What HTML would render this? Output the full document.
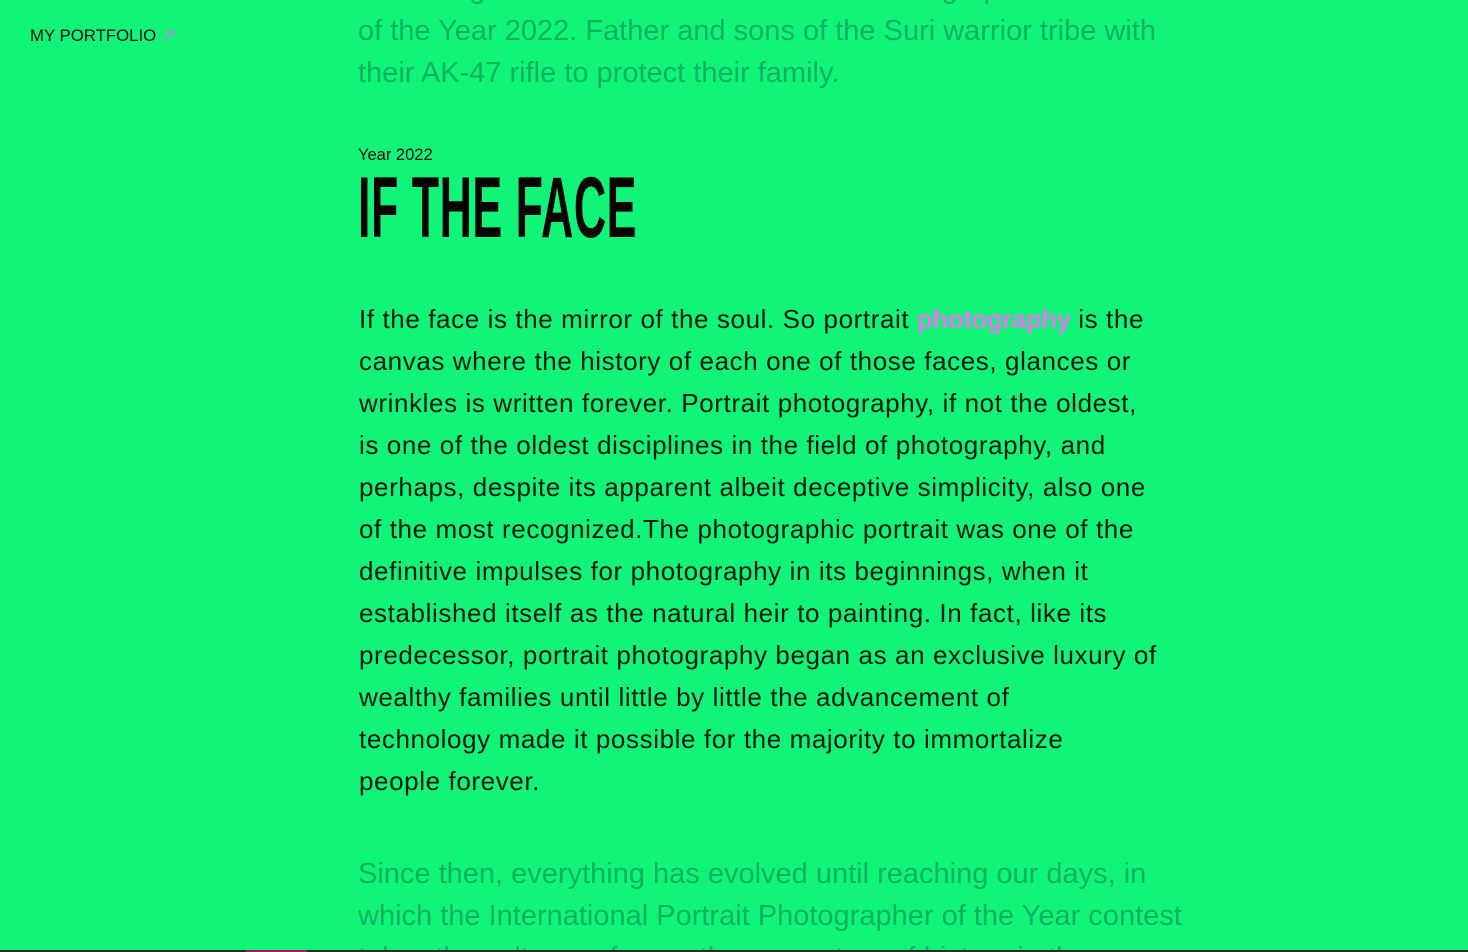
<!DOCTYPE html>
<html><head><style>
html,body{margin:0;padding:0;width:1468px;height:952px;overflow:hidden;background:#10f578;position:relative;font-family:"Liberation Sans",sans-serif}
.nav{position:absolute;left:30px;top:25px;font-size:16.8px;color:#111}
.nav span{color:#d86ef0;font-size:18px}
.fade{position:absolute;left:358px;font-size:29px;line-height:42px;color:#0cb261;white-space:nowrap}
.year{position:absolute;left:358px;top:146px;font-size:16.5px;color:#111}
.h{position:absolute;left:358px;top:160px;font-size:86px;font-weight:bold;color:#000;transform:scaleX(0.52);transform-origin:left top;white-space:nowrap;line-height:96px;letter-spacing:1px}
.body{position:absolute;left:359px;top:298px;font-size:26px;line-height:42px;color:#0a1a10;white-space:nowrap;letter-spacing:0.6px}
.body .p{color:#dd7cf0;font-weight:bold;letter-spacing:-0.5px}
.bar{position:absolute;left:0;top:950px;width:1468px;height:2px;background:#2a2a2a}
.bar i{position:absolute;left:246px;width:61px;height:2px;background:#b0106e}
</style></head><body>
<div class="nav">MY PORTFOLIO <span>↗</span></div>
<div class="fade" style="top:-32px">their image as the International Portrait Photographer</div>
<div class="fade" style="top:10px">of the Year 2022. Father and sons of the Suri warrior tribe with<br>their AK-47 rifle to protect their family.</div>
<div class="year">Year 2022</div>
<div class="h">IF THE FACE</div>
<div class="body">If the face is the mirror of the soul. So portrait <span class="p">photography</span> is the<br>canvas where the history of each one of those faces, glances or<br>wrinkles is written forever. Portrait photography, if not the oldest,<br>is one of the oldest disciplines in the field of photography, and<br>perhaps, despite its apparent albeit deceptive simplicity, also one<br>of the most recognized.The photographic portrait was one of the<br>definitive impulses for photography in its beginnings, when it<br>established itself as the natural heir to painting. In fact, like its<br>predecessor, portrait photography began as an exclusive luxury of<br>wealthy families until little by little the advancement of<br>technology made it possible for the majority to immortalize<br>people forever.</div>
<div class="fade" style="top:853px">Since then, everything has evolved until reaching our days, in<br>which the International Portrait Photographer of the Year contest<br>takes the cultures of more than a century of history in the</div>
<div class="bar"><i></i></div>
</body></html>
